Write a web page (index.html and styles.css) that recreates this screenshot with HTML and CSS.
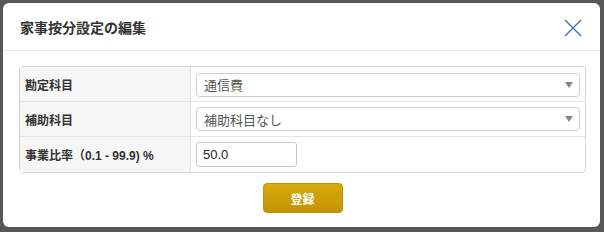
FILE: index.html
```html
<!DOCTYPE html>
<html>
<head>
<meta charset="UTF-8">
<title>家事按分設定の編集</title>
<link rel="stylesheet" href="styles.css">
</head>
<body>
	<div class="modal">
		<div class="modalHeader">
			<h2 class="modalTitle">家事按分設定の編集</h2>
			<span class="closeButton">
				<svg width="18" height="18" viewBox="0 0 18 18"><path d="M1 1L17 17M17 1L1 17" stroke="#3f6fa8" stroke-width="1.4" fill="none"/></svg>
			</span>
		</div>
		<div class="modalBody">
			<table class="formTable">
				<tr>
					<th>勘定科目</th>
					<td><div class="selectBox"><span>通信費</span><span class="arrow"></span></div></td>
				</tr>
				<tr>
					<th>補助科目</th>
					<td><div class="selectBox"><span>補助科目なし</span><span class="arrow"></span></div></td>
				</tr>
				<tr>
					<th>事業比率（0.1 - 99.9) %</th>
					<td><input type="text" class="rateField" value="50.0"></td>
				</tr>
			</table>
			<div class="actions">
				<button class="saveButton">登録</button>
			</div>
		</div>
	</div>
</body>
</html>
```
FILE: styles.css
```css
*{
	box-sizing: border-box;
	font-family: "Liberation Sans", "Noto Sans CJK JP", sans-serif;
}
body{
	margin: 0;
	background: #575757;
	height: 232px;
	overflow: hidden;
}
.modal{
	margin: 3px 4px 0 3px;
	height: 224px;
	background: white;
	border-radius: 6px;
}
.modalHeader{
	display: flex;
	align-items: center;
	justify-content: space-between;
	height: 48px;
	padding: 0 18px 0 17px;
	border-bottom: 1px solid #e3e3e3;
}
.modalTitle{
	margin: 0;
	font-size: 14px;
	font-weight: bold;
	color: #333;
}
.closeButton{
	display: flex;
	margin-top: 2px;
}
.modalBody{
	padding: 15px 14px 0 16px;
}
.formTable{
	width: 100%;
	border-collapse: separate;
	border-spacing: 0;
	border: 1px solid #d6d6d6;
	border-radius: 4px;
}
.formTable th{
	width: 171px;
	background: #f6f6f6;
	text-align: left;
	font-size: 12px;
	font-weight: bold;
	color: #333;
	padding: 0 5px;
	border-right: 1px solid #e3e3e3;
}
.formTable td{
	padding: 0 5px;
}
.formTable tr:nth-child(1) th, .formTable tr:nth-child(1) td{
	height: 34px;
	padding-top: 1px;
}
.formTable tr:nth-child(2) th, .formTable tr:nth-child(2) td,
.formTable tr:nth-child(3) th, .formTable tr:nth-child(3) td{
	border-top: 1px solid #e3e3e3;
	height: 35px;
}
.formTable tr:nth-child(3) th, .formTable tr:nth-child(3) td{
	height: 36px;
}
.selectBox{
	display: flex;
	align-items: center;
	justify-content: space-between;
	height: 24px;
	padding: 0 6px 0 7px;
	border: 1px solid #cfcfcf;
	border-radius: 4px;
	font-size: 13px;
	color: #555;
}
.arrow{
	width: 0;
	height: 0;
	border-left: 4px solid transparent;
	border-right: 4px solid transparent;
	border-top: 6px solid #888;
}
.rateField{
	width: 101px;
	height: 25px;
	padding: 0 6px;
	border: 1px solid #c8c8c8;
	border-radius: 3px;
	font-size: 13px;
	color: #222;
}
.actions{
	display: flex;
	justify-content: center;
	padding-top: 10px;
}
.saveButton{
	width: 80px;
	height: 30px;
	border: 1px solid #c39500;
	border-radius: 4px;
	background: linear-gradient(#d9aa0c, #c49500);
	color: white;
	font-size: 12px;
	font-weight: bold;
}
```
